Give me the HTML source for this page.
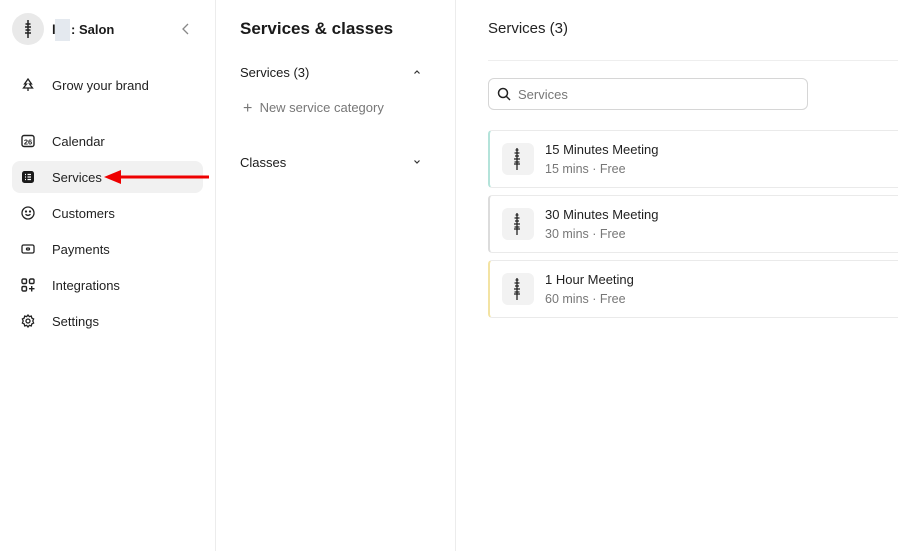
<!DOCTYPE html>
<html><head><meta charset="utf-8"><style>
*{box-sizing:border-box;margin:0;padding:0}
body{width:898px;height:551px;overflow:hidden;background:#fff;font-family:"Liberation Sans",sans-serif;color:#1a1a1a;position:relative;font-size:13px}
.side{position:absolute;left:0;top:0;width:216px;height:551px;border-right:1px solid #ececec}
.mid{position:absolute;left:216px;top:0;width:240px;height:551px;border-right:1px solid #ececec}
.abs{position:absolute}
.nav{position:absolute;left:12px;width:191px;height:32px;border-radius:8px;display:flex;align-items:center}
.nav svg{position:absolute;left:9px}
.nav span{position:absolute;left:40px;font-size:13px;color:#222}
.card{position:absolute;left:488px;width:420px;height:58px;border:1px solid #eaeaea;border-radius:4px}
.card .ic{position:absolute;left:12px;top:12px;width:32px;height:32px;border-radius:6px;background:#f2f2f2}
.card .t{position:absolute;left:55px;top:11px;font-size:13px;color:#222}
.card .s{position:absolute;left:55px;top:31px;font-size:12.5px;color:#777}
</style></head><body>
<div class="side">
 <div class="abs" style="left:12px;top:13px;width:32px;height:32px;border-radius:50%;background:#e9e9e9"></div>
 <svg class="abs" style="left:22px;top:19px" width="12" height="20" viewBox="0 0 12 20"><path d="M6 1v18M3.5 5h5M3 8h6M3.5 11h5M3 14h6" stroke="#222" stroke-width="1.5" fill="none"/></svg>
 <div class="abs" style="left:52px;top:22px;font-weight:bold;font-size:13px">l</div>
 <div class="abs" style="left:55px;top:19px;width:15px;height:22px;background:#e4e9ef"></div>
 <div class="abs" style="left:71px;top:22px;font-weight:bold;font-size:13px">: Salon</div>
 <svg class="abs" style="left:181px;top:22px" width="10" height="14" viewBox="0 0 10 14"><path d="M7 2L2 7l5 5" stroke="#888" stroke-width="1.3" fill="none"/></svg>
 <div class="nav" style="top:69px"><svg width="14" height="14" viewBox="0 0 14 14" fill="none" stroke="#222" stroke-width="1.3"><path d="M7 1L3.5 6h2L2.5 10h9l-3-4h2z"/><path d="M7 10v3"/></svg><span>Grow your brand</span></div>
 <div class="nav" style="top:125px"><svg width="14" height="14" viewBox="0 0 14 14"><rect x="1" y="1.5" width="12" height="11" rx="2" fill="none" stroke="#222" stroke-width="1.4"/><text x="7" y="10.5" font-size="7.5" font-weight="bold" text-anchor="middle" font-family="Liberation Sans" fill="#222">26</text></svg><span>Calendar</span></div>
 <div class="nav" style="top:161px;background:#f1f1f1"><svg width="14" height="14" viewBox="0 0 14 14"><rect x="1" y="1" width="12" height="12" rx="2.5" fill="#1a1a1a"/><path d="M4 4.5h1M6.5 4.5h3.5M4 7h1M6.5 7h3.5M4 9.5h1M6.5 9.5h3.5" stroke="#fff" stroke-width="1.2"/></svg><span>Services</span></div>
 <div class="nav" style="top:197px"><svg width="14" height="14" viewBox="0 0 14 14" fill="none" stroke="#222" stroke-width="1.3"><circle cx="7" cy="7" r="6"/><path d="M4.5 8.3q2.5 2.2 5 0"/><circle cx="5" cy="5.5" r=".5" fill="#222"/><circle cx="9" cy="5.5" r=".5" fill="#222"/></svg><span>Customers</span></div>
 <div class="nav" style="top:233px"><svg width="14" height="14" viewBox="0 0 14 14" fill="none" stroke="#222" stroke-width="1.3"><rect x="1" y="3" width="12" height="8" rx="1.5"/><rect x="5.5" y="6" width="3" height="2" rx="1"/></svg><span>Payments</span></div>
 <div class="nav" style="top:269px"><svg width="14" height="14" viewBox="0 0 14 14" fill="none" stroke="#222" stroke-width="1.4"><rect x="1" y="1" width="4.5" height="4.5" rx="1.3"/><rect x="8.5" y="1" width="4.5" height="4.5" rx="1.3"/><rect x="1" y="8.5" width="4.5" height="4.5" rx="1.3"/><path d="M10.7 8v5.5M8 10.7h5.5"/></svg><span>Integrations</span></div>
 <div class="nav" style="top:305px"><svg width="14" height="14" viewBox="0 0 14 14" fill="none" stroke="#222" stroke-width="1.3"><path d="M7 1l1.3 1.6 2-.5.5 2L12.6 5l-.8 2 .8 2-1.8.9-.5 2-2-.5L7 13l-1.3-1.6-2 .5-.5-2L1.4 9l.8-2-.8-2 1.8-.9.5-2 2 .5z"/><circle cx="7" cy="7" r="2"/></svg><span>Settings</span></div>
 <svg class="abs" style="left:103px;top:170px" width="108" height="14" viewBox="0 0 108 14"><path d="M16 7h90" stroke="#e00" stroke-width="3"/><path d="M1 7l17-7v14z" fill="#e00"/></svg>
</div>
<div class="mid">
 <div class="abs" style="left:24px;top:19px;font-size:17px;font-weight:bold;color:#1a1a1a">Services &amp; classes</div>
 <div class="abs" style="left:24px;top:65px;font-size:13px">Services (3)</div>
 <svg class="abs" style="left:197px;top:69px" width="8" height="6" viewBox="0 0 8 6"><path d="M1.5 4.5L4 2l2.5 2.5" stroke="#333" stroke-width="1.2" fill="none"/></svg>
 <div class="abs" style="left:27px;top:99px;font-size:13px;color:#777"><span style="font-size:16px;position:relative;top:1px">+</span>&nbsp; New service category</div>
 <div class="abs" style="left:24px;top:155px;font-size:13px">Classes</div>
 <svg class="abs" style="left:197px;top:159px" width="8" height="6" viewBox="0 0 8 6"><path d="M1.5 1.5L4 4l2.5-2.5" stroke="#333" stroke-width="1.2" fill="none"/></svg>
</div>
<div class="abs" style="left:488px;top:20px;font-size:15px;color:#222">Services (3)</div>
<div class="abs" style="left:488px;top:60px;width:410px;height:1px;background:#eee"></div>
<div class="abs" style="left:488px;top:78px;width:320px;height:32px;border:1px solid #d6d6d6;border-radius:6px"></div>
<svg class="abs" style="left:497px;top:87px" width="14" height="14" viewBox="0 0 14 14" fill="none" stroke="#222" stroke-width="1.5"><circle cx="6" cy="6" r="4.5"/><path d="M9.5 9.5L13 13"/></svg>
<div class="abs" style="left:518px;top:87px;font-size:13px;color:#777">Services</div>
<div class="card" style="top:130px;border-left:2px solid #b4e3da"><div class="ic"></div><div class="t">15 Minutes Meeting</div><div class="s">15 mins · Free</div></div>
<div class="card" style="top:195px;border-left:2px solid #dcdcdc"><div class="ic"></div><div class="t">30 Minutes Meeting</div><div class="s">30 mins · Free</div></div>
<div class="card" style="top:260px;border-left:2px solid #f3e3a3"><div class="ic"></div><div class="t">1 Hour Meeting</div><div class="s">60 mins · Free</div></div>
<svg class="abs" style="left:511px;top:147px" width="12" height="24" viewBox="0 0 12 24"><path d="M6 1v22M4.5 3h3M3.5 6h5M4 9h4M3 12h6M3.5 15h5M3 17h6" stroke="#222" stroke-width="1.3" fill="none"/></svg>
<svg class="abs" style="left:511px;top:212px" width="12" height="24" viewBox="0 0 12 24"><path d="M6 1v22M4.5 3h3M3.5 6h5M4 9h4M3 12h6M3.5 15h5M3 17h6" stroke="#222" stroke-width="1.3" fill="none"/></svg>
<svg class="abs" style="left:511px;top:277px" width="12" height="24" viewBox="0 0 12 24"><path d="M6 1v22M4.5 3h3M3.5 6h5M4 9h4M3 12h6M3.5 15h5M3 17h6" stroke="#222" stroke-width="1.3" fill="none"/></svg>
</body></html>
